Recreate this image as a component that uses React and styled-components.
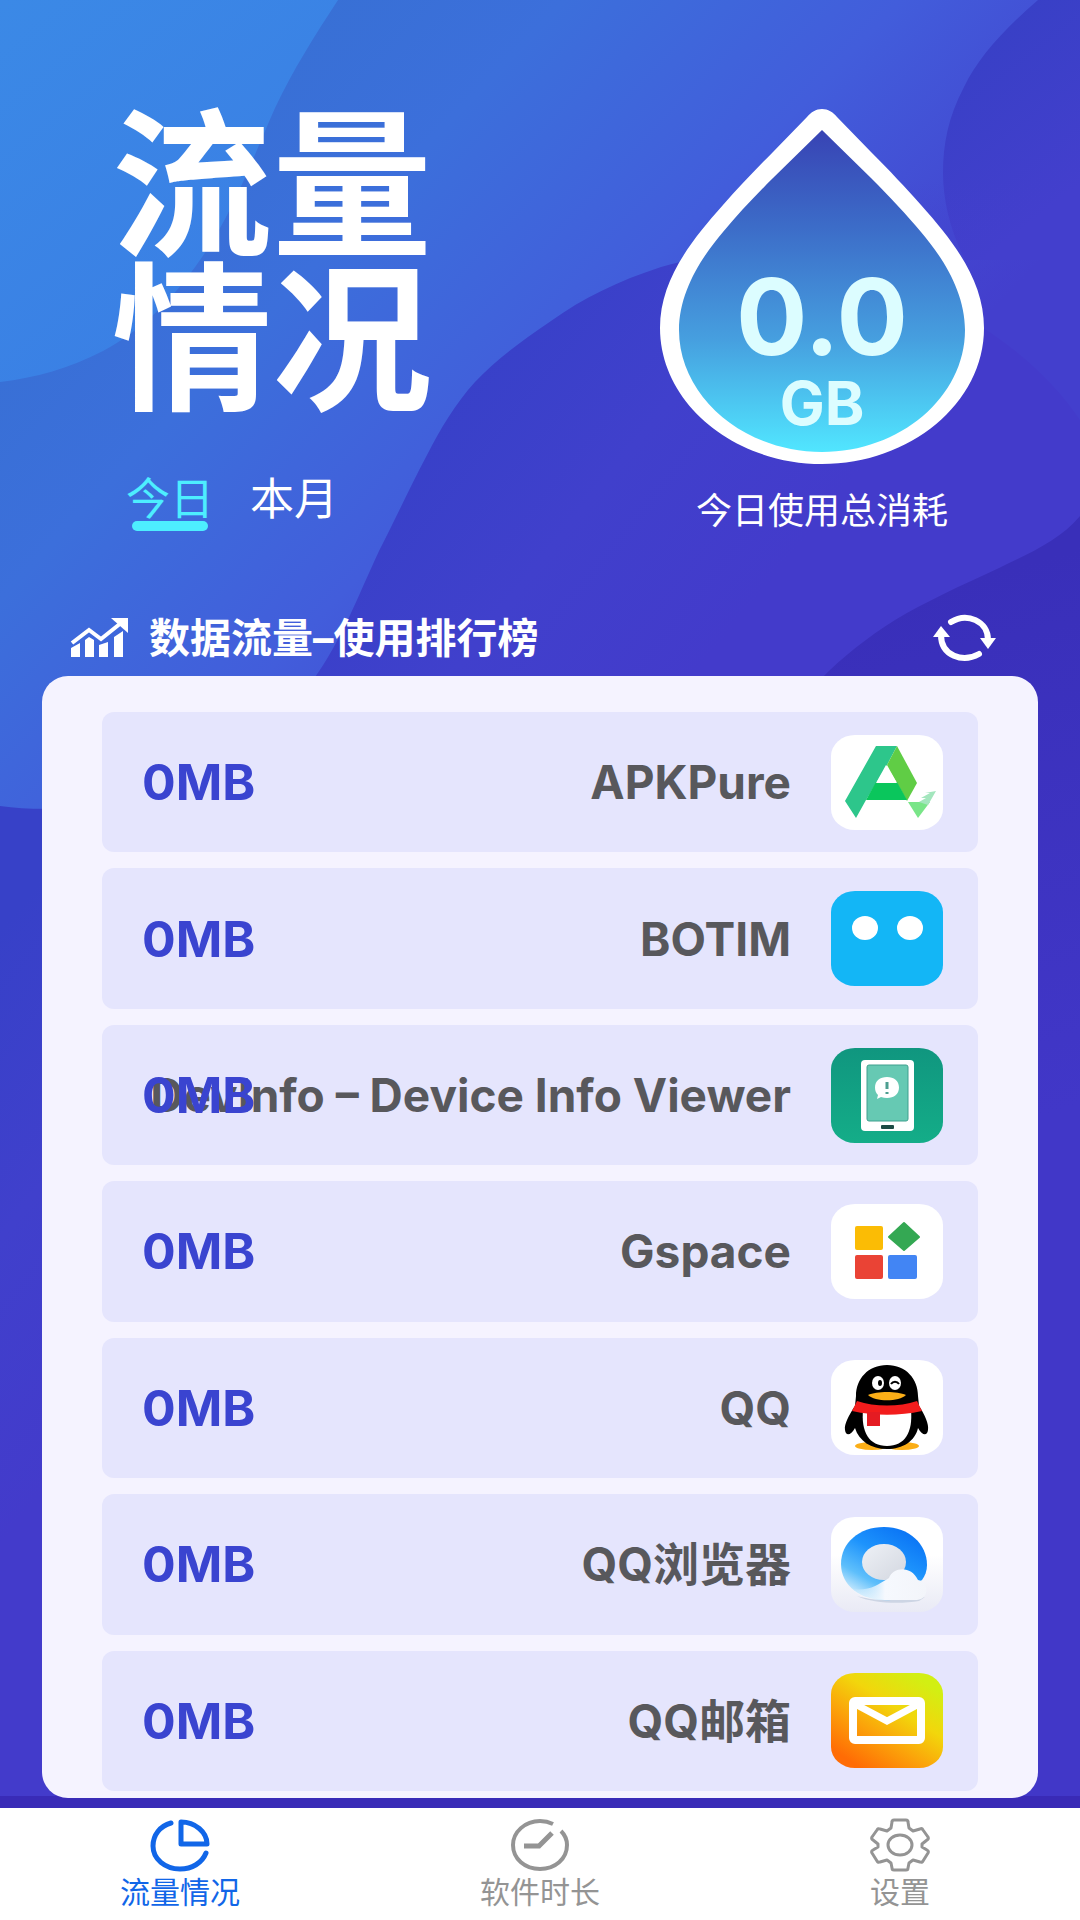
import React, { useState } from 'react';
import styled, { createGlobalStyle } from 'styled-components';

/* Custom Colors */
const cyan = '#4deeff';
const ice = '#dcfdff';
const snow = '#f5f3ff';
const lavender = '#e5e5fd';
const royalBlue = '#3a44d0';
const graphite = '#58585c';
const activeBlue = '#1166e8';
const mutedGrey = '#949494';

const GlobalStyle = createGlobalStyle`
  * {
    box-sizing: border-box;
  }

  body {
    margin: 0;
    background: #3f38c8;
    font-family: Inter, 'Noto Sans CJK SC', sans-serif;
  }

  button {
    padding: 0;
    border: none;
    background: none;
    font: inherit;
    color: inherit;
    cursor: pointer;
  }
`;

const Page = styled.div`
  position: relative;
  display: flex;
  flex-direction: column;
  min-height: 100vh;
  isolation: isolate;
`;

const Backdrop = styled.svg`
  position: absolute;
  inset: 0;
  width: 100%;
  height: 100%;
  z-index: -1;
`;

const Hero = styled.header`
  display: flex;
  justify-content: space-between;
  padding: 109px 96px 0 112px;
  height: 592px;
`;

const HeroLeft = styled.div`
  display: flex;
  flex-direction: column;
`;

const Title = styled.h1`
  margin: 0;
  width: 2em;
  font-size: 160px;
  line-height: 154px;
  font-weight: 700;
  color: white;
`;

const Periods = styled.div`
  display: flex;
  gap: 36px;
  margin-top: 60px;
  padding-left: 14px;
`;

const Period = styled.button`
  display: flex;
  flex-direction: column;
  align-items: center;
  font-size: 44px;
  line-height: 44px;
  color: ${(props) => (props.$active ? cyan : 'white')};

  &::after {
    content: "";
    width: 76px;
    height: 10px;
    border-radius: 5px;
    background: ${(props) => (props.$active ? cyan : 'transparent')};
  }
`;

const Total = styled.div`
  display: flex;
  flex-direction: column;
  align-items: center;
`;

const Drop = styled.div`
  display: grid;
  width: 324px;
  height: 356px;

  > * {
    grid-area: 1 / 1;
  }
`;

const DropText = styled.div`
  display: flex;
  flex-direction: column;
  align-items: center;
  padding-top: 156px;
  color: ${ice};
  font-weight: 700;
`;

const Amount = styled.span`
  font-size: 106px;
  line-height: 104px;
`;

const Unit = styled.span`
  font-size: 60px;
  line-height: 68px;
`;

const Caption = styled.p`
  margin: 20px 0 0;
  font-size: 36px;
  line-height: 52px;
  color: white;
`;

const RankBar = styled.div`
  display: flex;
  align-items: center;
  gap: 20px;
  height: 84px;
  padding: 8px 83px 0 70px;
  color: white;
`;

const RankTitle = styled.h2`
  flex: 1;
  margin: 0;
  font-size: 41px;
  line-height: 52px;
  font-weight: 700;
`;

const RefreshButton = styled.button`
  display: flex;
`;

const Card = styled.ul`
  flex: 1;
  display: flex;
  flex-direction: column;
  gap: 16px;
  margin: 0 42px 10px;
  padding: 36px 60px 7px;
  list-style: none;
  border-radius: 26px;
  background: ${snow};
`;

const Row = styled.li`
  flex: 1;
  display: grid;
  grid-template-columns: 1fr 112px;
  align-items: center;
  column-gap: 40px;
  min-height: 140px;
  padding: 0 35px 0 40px;
  border-radius: 12px;
  background: ${lavender};
`;

/* usage sits on top of the name when the name is long */
const Usage = styled.span`
  grid-area: 1 / 1;
  z-index: 1;
  font-size: 50px;
  line-height: 60px;
  font-weight: 700;
  color: ${royalBlue};
`;

const AppName = styled.span`
  grid-area: 1 / 1;
  overflow: hidden;
  white-space: nowrap;
  text-align: right;
  font-size: 46px;
  line-height: 60px;
  font-weight: 700;
  color: ${graphite};
`;

const AppIcon = styled.svg`
  display: block;
  width: 112px;
  height: 95px;
`;

const TabBar = styled.nav`
  display: grid;
  grid-template-columns: repeat(3, 1fr);
  height: 112px;
  background: white;
`;

const Tab = styled.button`
  display: flex;
  flex-direction: column;
  align-items: center;
  padding-top: 10px;
  font-size: 30px;
  line-height: 40px;
  color: ${(props) => (props.$active ? activeBlue : mutedGrey)};
`;

function Waves() {
  return (
    <Backdrop viewBox="0 0 1080 1920" preserveAspectRatio="none" aria-hidden="true">
      <defs>
        <linearGradient id="sky" gradientUnits="userSpaceOnUse" x1="0" y1="0" x2="300" y2="360">
          <stop offset="0" stopColor="#3b89e6" />
          <stop offset="1" stopColor="#3a7de4" />
        </linearGradient>
        <linearGradient id="mid" gradientUnits="userSpaceOnUse" x1="230" y1="100" x2="740" y2="580">
          <stop offset="0" stopColor="#3870d5" />
          <stop offset=".25" stopColor="#3c6fdb" />
          <stop offset=".6" stopColor="#425ddb" />
          <stop offset="1" stopColor="#433fcd" />
        </linearGradient>
        <linearGradient id="deep" gradientUnits="userSpaceOnUse" x1="440" y1="380" x2="740" y2="620">
          <stop offset="0" stopColor="#3741c8" />
          <stop offset=".5" stopColor="#4040cc" />
          <stop offset="1" stopColor="#433bcb" />
        </linearGradient>
        <linearGradient id="corner" gradientUnits="userSpaceOnUse" x1="950" y1="60" x2="1060" y2="200">
          <stop offset="0" stopColor="#3840c6" />
          <stop offset="1" stopColor="#433fcd" />
        </linearGradient>
        <linearGradient id="dusk" gradientUnits="userSpaceOnUse" x1="960" y1="580" x2="1100" y2="1100">
          <stop offset="0" stopColor="#392fb9" />
          <stop offset="1" stopColor="#4137c8" />
        </linearGradient>
        <linearGradient id="veil" gradientUnits="userSpaceOnUse" x1="0" y1="180" x2="0" y2="420">
          <stop offset="0" stopColor="#433fcd" stopOpacity="0" />
          <stop offset="1" stopColor="#433fcd" />
        </linearGradient>
      </defs>
      <rect width="1080" height="1920" fill="url(#mid)" />
      <path d="M0 0H338C315 35 293 70 275 108C250 165 232 215 200 260C172 300 142 330 103 351C70 368 35 378 0 382Z" fill="url(#sky)" />
      <path d="M1038 0C1003 30 978 58 964 87C948 117 943 145 943 173C943 200 950 230 965 260H1080V0Z" fill="url(#corner)" />
      <rect x="820" y="180" width="260" height="300" fill="url(#veil)" />
      <path d="M1080 420C1000 300 800 225 661 267C618 281 583 298 551 321C520 342 496 360 475 382C455 404 441 428 427 455C410 487 396 518 379 551C357 598 342 640 313 680C250 770 120 822 0 806V1920H1080Z" fill="url(#deep)" />
      <path d="M1080 516C1060 540 1030 553 999 568C960 586 925 602 895 620C868 637 842 657 820 680V1920H1080Z" fill="url(#dusk)" />
      <rect y="1796" width="1080" height="14" fill="#3322aa" fillOpacity=".6" />
    </Backdrop>
  );
}

function DropShape() {
  return (
    <svg viewBox="0 0 324 356" aria-hidden="true">
      <defs>
        <linearGradient id="water" x1="0" y1="0" x2="0" y2="1">
          <stop offset="0" stopColor="#3843b4" />
          <stop offset=".3" stopColor="#3c6cc8" />
          <stop offset=".65" stopColor="#469fdf" />
          <stop offset="1" stopColor="#51e6ff" />
        </linearGradient>
      </defs>
      <path
        d="M162 0C168 0 173 3 177 8L211 43C230 62 245 78 261 96C297 136 324 174 324 219C324 294 250 355 162 355C74 355 0 294 0 219C0 174 27 136 63 96C79 78 94 62 113 43L147 8C151 3 156 0 162 0Z"
        fill="white"
      />
      <path
        d="M162 21L211 69C230 88 246 105 261 123C284 150 305 184 305 221C305 288 240 343 162 343C84 343 19 288 19 221C19 184 40 150 63 123C78 105 94 88 113 69Z"
        fill="url(#water)"
      />
    </svg>
  );
}

const ChartIcon = () => (
  <svg width="59" height="40" viewBox="0 0 59 40" fill="white" aria-hidden="true">
    <path d="M2 25L19 12L31 21L51 5" fill="none" stroke="white" strokeWidth="4" />
    <path d="M41 0H58V15Z" />
    <path d="M1 30L10 25V39H1ZM15 22L19 19L24 22V39H15ZM29 27L38 24V39H29ZM44 19L53 13V39H44Z" />
  </svg>
);

const RefreshIcon = () => (
  <svg width="64" height="50" viewBox="0 0 64 50" aria-hidden="true">
    <g fill="none" stroke="white" strokeWidth="6" strokeLinecap="round">
      <path d="M18 9C34 -1 55 8 55 27" />
      <path d="M46 41C30 50 8 43 8 22" />
    </g>
    <path d="M47 25H63L55 36Z" fill="white" />
    <path d="M0 24L8 13L17 24Z" fill="white" />
  </svg>
);

const Tile = ({ fill = 'white' }) => <rect width="112" height="95" rx="24" ry="21" fill={fill} />;

const ApkPureIcon = () => (
  <AppIcon viewBox="0 0 112 95" aria-hidden="true">
    <Tile />
    <path d="M45 11H66L56 30L35 65L25 83L14 66Z" fill="#2dc68b" />
    <path d="M66 11L86 48L76 66L56 30Z" fill="#60cd45" />
    <path d="M45 47H66L76 65H35Z" fill="#0ac65c" />
    <path d="M55 30L66 48H45Z" fill="white" />
    <path d="M77 67H99L87 83Z" fill="#79e588" />
    <path d="M88 67L95 63H90L99 58H94L105 56L97 70Z" fill="#a3e6bd" />
  </AppIcon>
);

const BotimIcon = () => (
  <AppIcon viewBox="0 0 112 95" aria-hidden="true">
    <Tile fill="#13b6f6" />
    <ellipse cx="34" cy="37" rx="13" ry="12" fill="white" />
    <ellipse cx="79" cy="37" rx="13" ry="12" fill="white" />
  </AppIcon>
);

const DevInfoIcon = () => (
  <AppIcon viewBox="0 0 112 95" aria-hidden="true">
    <defs>
      <linearGradient id="teal" x1="0" y1="0" x2="0" y2="1">
        <stop offset="0" stopColor="#10967f" />
        <stop offset="1" stopColor="#14ad88" />
      </linearGradient>
    </defs>
    <Tile fill="url(#teal)" />
    <rect x="30" y="12" width="53" height="71" rx="4" fill="white" />
    <rect x="36" y="17" width="41" height="56" rx="2" fill="#66c9b3" stroke="#3fa08e" />
    <path d="M56 29C63 29 68 33 68 39.500C68 46 63 50 56 50C54 50 52 49.500 50 49L46 51L47 47C45 45 44 43 44 39.500C44 33 49 29 56 29Z" fill="white" />
    <path d="M56 34V41M56 44V46" stroke="#4d9e90" strokeWidth="3" />
    <rect x="50" y="77" width="13" height="4" rx="1" fill="#1d4b45" />
  </AppIcon>
);

const GspaceIcon = () => (
  <AppIcon viewBox="0 0 112 95" aria-hidden="true">
    <Tile />
    <rect x="24" y="22" width="28" height="24" rx="2" fill="#fbbc05" />
    <rect x="24" y="51" width="28" height="24" rx="2" fill="#ea4335" />
    <rect x="57" y="51" width="29" height="24" rx="2" fill="#4285f4" />
    <path d="M73 19L88 33L73 46L58 33Z" fill="#34a853" stroke="#34a853" strokeWidth="2" strokeLinejoin="round" />
  </AppIcon>
);

const QQIcon = () => (
  <AppIcon viewBox="0 0 112 95" aria-hidden="true">
    <Tile />
    <ellipse cx="41" cy="86" rx="17" ry="4" fill="#fbae17" />
    <ellipse cx="71" cy="86" rx="17" ry="4" fill="#fbae17" />
    <path d="M56 5C75 5 87 19 87 36L88 46C94 55 98 64 97 70C96 77 91 75 87 68C84 81 72 89 56 89C40 89 28 81 24 68C20 75 15 77 14 70C13 64 18 55 24 46L25 36C25 19 37 5 56 5Z" />
    <path d="M32 50H80C82 72 74 86 56 86C38 86 30 72 32 50Z" fill="white" />
    <path d="M26 41C44 47 68 47 86 41L91 51C68 56 44 56 21 51Z" fill="#f21c1c" />
    <path d="M36 52H49V66H36Z" fill="#e51b22" />
    <ellipse cx="47" cy="23" rx="6" ry="7" fill="white" />
    <ellipse cx="64" cy="23" rx="6" ry="7" fill="white" />
    <ellipse cx="49" cy="23" rx="2" ry="3" />
    <path d="M60 24C62 21 66 21 68 24" fill="none" stroke="black" strokeWidth="2" />
    <path d="M37 35C46 31 66 31 75 35C68 42 44 42 37 35Z" fill="#fbae17" />
  </AppIcon>
);

const BrowserIcon = () => (
  <AppIcon viewBox="0 0 112 95" aria-hidden="true">
    <defs>
      <linearGradient id="paper" x1="0" y1="0" x2="0" y2="1">
        <stop offset=".4" stopColor="white" />
        <stop offset="1" stopColor="#e9eaf5" />
      </linearGradient>
      <linearGradient id="ring" x1=".85" y1=".1" x2=".25" y2="1">
        <stop offset="0" stopColor="#0a74f5" />
        <stop offset=".4" stopColor="#1d93fc" />
        <stop offset=".75" stopColor="#5ebffb" />
        <stop offset="1" stopColor="#d8effd" />
      </linearGradient>
      <linearGradient id="hole" x1="0" y1="0" x2="1" y2="1">
        <stop offset="0" stopColor="#eef1f6" />
        <stop offset="1" stopColor="#d3d7e0" />
      </linearGradient>
      <linearGradient id="cloud" x1="0" y1="0" x2="1" y2="0">
        <stop offset="0" stopColor="white" stopOpacity="0" />
        <stop offset=".45" stopColor="#f6f9fe" />
        <stop offset="1" stopColor="#f3f5fa" />
      </linearGradient>
    </defs>
    <Tile fill="url(#paper)" />
    <path d="M26 79C42 84 80 84 94 80L88 84C72 87 42 87 26 79Z" fill="#cdd5e4" />
    <path d="M53 10C78 10 96 27 96 48C96 54 94 59 91 63L60 83C32 85 10 70 10 47C10 26 28 10 53 10Z" fill="url(#ring)" />
    <ellipse cx="53" cy="45" rx="22" ry="18" fill="url(#hole)" />
    <path d="M20 72C40 74 46 68 58 61C62 50 80 48 87 63C98 64 99 82 86 83H54C38 83 28 80 20 72Z" fill="url(#cloud)" />
  </AppIcon>
);

const MailIcon = () => (
  <AppIcon viewBox="0 0 112 95" aria-hidden="true">
    <defs>
      <linearGradient id="sun" x1=".85" y1=".1" x2=".2" y2=".95">
        <stop offset="0" stopColor="#d2ef13" />
        <stop offset=".35" stopColor="#f2d60c" />
        <stop offset=".65" stopColor="#fba40a" />
        <stop offset="1" stopColor="#ff6c05" />
      </linearGradient>
    </defs>
    <Tile fill="url(#sun)" />
    <rect x="22" y="28" width="68" height="39" rx="2" fill="none" stroke="white" strokeWidth="8" />
    <path d="M24 31L56 48L88 31" fill="none" stroke="white" strokeWidth="7" />
  </AppIcon>
);

const PieIcon = () => (
  <svg width="60" height="54" viewBox="0 0 60 54" fill="none" stroke="currentColor" strokeWidth="5" strokeLinecap="round" strokeLinejoin="round" aria-hidden="true">
    <path d="M21 5C10 8 3 17 3 28C3 41 15 51 30 51C42 51 52 45 56 35" />
    <path d="M31 4V26H57C57 14 45 4 31 4Z" />
  </svg>
);

const ClockIcon = () => (
  <svg width="60" height="54" viewBox="0 0 60 54" fill="none" stroke="currentColor" strokeWidth="4" aria-hidden="true">
    <path d="M43 6C39 4 35 3 30 3C15 3 3 14 3 27C3 41 15 51 30 51C45 51 57 41 57 27C57 22 55 17 51 13" />
    <path d="M14 28H29L42 15" strokeWidth="5" />
  </svg>
);

const GearIcon = () => (
  <svg width="60" height="54" viewBox="0 0 60 54" fill="none" stroke="currentColor" strokeWidth="3" strokeLinejoin="round" aria-hidden="true">
    <path d="M24 2H36Q38 2 38 4L39 10L43 13L50 11Q52 10 53 12L58 19Q59 21 57 22L52 26V29L57 32Q59 33 58 35L53 43Q52 45 50 44L43 42L39 45L38 50Q38 52 36 52H24Q22 52 22 50L21 45L17 42L10 44Q8 45 7 43L2 35Q1 33 3 32L8 29V26L3 22Q1 21 2 19L7 12Q8 10 10 11L17 13L21 10L22 4Q22 2 24 2Z" />
    <ellipse cx="30" cy="27" rx="12" ry="10" />
  </svg>
);

const apps = [
  { name: 'APKPure', usage: '0MB', Icon: ApkPureIcon },
  { name: 'BOTIM', usage: '0MB', Icon: BotimIcon },
  { name: 'DevInfo – Device Info Viewer', usage: '0MB', Icon: DevInfoIcon },
  { name: 'Gspace', usage: '0MB', Icon: GspaceIcon },
  { name: 'QQ', usage: '0MB', Icon: QQIcon },
  { name: 'QQ浏览器', usage: '0MB', Icon: BrowserIcon },
  { name: 'QQ邮箱', usage: '0MB', Icon: MailIcon },
];

const tabs = [
  { label: '流量情况', Icon: PieIcon },
  { label: '软件时长', Icon: ClockIcon },
  { label: '设置', Icon: GearIcon },
];

function App() {
  const [period, setPeriod] = useState('今日');
  const [tab, setTab] = useState('流量情况');

  return (
    <>
      <GlobalStyle />
      <Page lang="zh-CN">
        <Waves />
        <Hero>
          <HeroLeft>
            <Title>流量情况</Title>
            <Periods>
              {['今日', '本月'].map((p) => (
                <Period key={p} $active={p === period} onClick={() => setPeriod(p)}>{p}</Period>
              ))}
            </Periods>
          </HeroLeft>
          <Total>
            <Drop>
              <DropShape />
              <DropText>
                <Amount>0.0</Amount>
                <Unit>GB</Unit>
              </DropText>
            </Drop>
            <Caption>{period}使用总消耗</Caption>
          </Total>
        </Hero>
        <RankBar>
          <ChartIcon />
          <RankTitle>数据流量–使用排行榜</RankTitle>
          <RefreshButton aria-label="刷新">
            <RefreshIcon />
          </RefreshButton>
        </RankBar>
        <Card>
          {apps.map(({ name, usage, Icon }) => (
            <Row key={name}>
              <AppName>{name}</AppName>
              <Usage>{usage}</Usage>
              <Icon />
            </Row>
          ))}
        </Card>
        <TabBar>
          {tabs.map(({ label, Icon }) => (
            <Tab key={label} $active={label === tab} onClick={() => setTab(label)}>
              <Icon />
              {label}
            </Tab>
          ))}
        </TabBar>
      </Page>
    </>
  );
}

export default App;
